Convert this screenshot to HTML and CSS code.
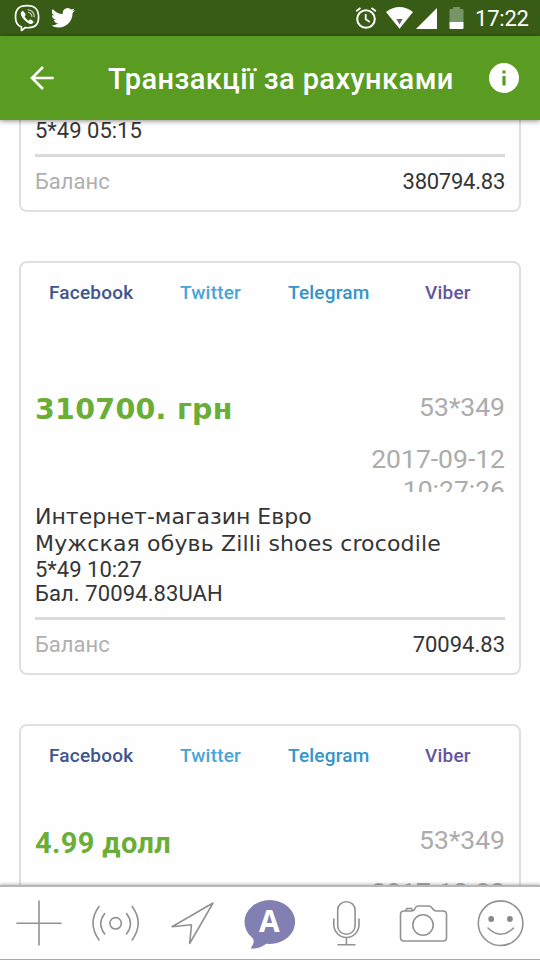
FILE: index.html
```html
<!DOCTYPE html>
<html lang="uk">
<head>
<meta charset="utf-8">
<title>Транзакції за рахунками</title>
<link rel="stylesheet" href="styles.css">
</head>
<body>
<div class="screen">
  <div class="status">
    <svg class="viber" width="26" height="28" viewBox="0 0 26 28" fill="none" stroke="#fff" stroke-width="1.8" stroke-linecap="round" stroke-linejoin="round">
      <path d="M7.500 24V27.500Q8 27.800 11 24.700C20.500 25.200 24.500 22.500 24.600 14.500C24.600 6 21 2.700 13 2.700C5 2.700 1.500 6 1.500 14C1.500 19.500 3.500 22.700 7.500 24Z" stroke-width="1.700"/>
      <path d="M8.300 8.500C6.200 9.200 7 13 10.800 17C14.800 20.900 18.100 21.500 18.900 19.500C19.500 18 16.500 16.200 15.500 17.200L14.600 18C12.800 17.300 10.800 15.200 10.300 13.300L11 12.300C11.700 11.200 9.800 8.200 8.300 8.500Z" fill="#fff" stroke-width="1"/>
      <path d="M14 6.800C18 7.200 20.200 9.800 20.300 13.800M14.500 9.500C16.700 9.900 17.700 11.200 17.900 13.500" stroke-width="1.200" opacity=".7"/>
    </svg>
    <svg class="bird" width="24" height="20" viewBox="0 0 24 20" fill="#fff"><path d="M24 2.370a9.800 9.800 0 0 1-2.830.78A4.940 4.940 0 0 0 23.340.420a9.860 9.860 0 0 1-3.130 1.200A4.920 4.920 0 0 0 11.700 5a5.100 5.100 0 0 0 .13 1.120A13.970 13.970 0 0 1 1.690.980a4.930 4.930 0 0 0 1.530 6.570A4.900 4.900 0 0 1 1 6.940V7a4.930 4.930 0 0 0 3.950 4.830 4.900 4.900 0 0 1-2.220.08 4.930 4.930 0 0 0 4.600 3.420A9.880 9.880 0 0 1 0 17.370 13.930 13.930 0 0 0 7.550 19.580c9.140 0 14.310-7.720 13.970-14.640A10 10 0 0 0 24 2.370Z"/></svg>
    <span class="grow"></span>
    <svg class="alarm" width="22" height="24" viewBox="0 0 22 24" fill="none" stroke="#fff" stroke-width="2"><circle cx="11" cy="13" r="8.800"/><path d="M10.700 8V13.300L14.800 16M1.200 5.300L5.500 1.900M20.800 5.300L16.500 1.900" stroke-width="1.800"/></svg>
    <svg class="wifi" width="27" height="22" viewBox="0 0 27 22"><path d="M0 5Q13.500-5 27 5L13.500 21.800Z" fill="#fff"/><path d="M10.300 12H16.700L13.500 17.500Z" fill="#766080"/></svg>
    <svg class="signal" width="21" height="21" viewBox="0 0 21 21"><path d="M21 0V21H0Z" fill="#fff"/></svg>
    <svg class="battery" width="15" height="22" viewBox="0 0 15 22"><path d="M1.500 2H4V0H11V2H13.500Q14.500 2 14.500 3V15H.5V3Q.5 2 1.500 2Z" fill="#779466"/><path d="M.5 15H14.500V21Q14.500 22 13.500 22H1.500Q.5 22 .5 21Z" fill="#fff"/></svg>
    <span class="clock">17:22</span>
  </div>
  <header class="bar">
    <svg class="back" width="26" height="26" viewBox="0 0 26 26" fill="none" stroke="#fff" stroke-width="2.600"><path d="M24.700 13H3M14 2L3 13L14 24"/></svg>
    <h1>Транзакції за рахунками</h1>
    <svg class="info" width="30" height="30" viewBox="0 0 30 30"><circle cx="15" cy="15" r="15" fill="#fff"/><path d="M13.400 7.500H16.600V10.500H13.400ZM13.400 13H16.600V22.500H13.400Z" fill="#5a9c22"/></svg>
  </header>
  <main class="feed">
    <section class="card cut">
      <p class="line first">5*49 05:15</p>
      <div class="balance"><span>Баланс</span><b class="tight">380794.83</b></div>
    </section>
    <section class="card">
      <nav class="share"><span class="fb">Facebook</span><span class="tw">Twitter</span><span class="tg">Telegram</span><span class="vb">Viber</span></nav>
      <div class="summary">
        <strong class="amount wide">310700. грн</strong>
        <div class="meta"><p class="acct">53*349</p><p class="date">2017-09-12<br>10:27:26</p></div>
      </div>
      <div class="details">
        <p class="note shop">Интернет-магазин Евро</p>
        <p class="note item">Мужская обувь Zilli shoes crocodile</p>
        <p class="line">5*49 10:27</p>
        <p class="line total">Бал. 70094.83UAH</p>
      </div>
      <div class="balance"><span>Баланс</span><b>70094.83</b></div>
    </section>
    <section class="card last">
      <nav class="share"><span class="fb">Facebook</span><span class="tw">Twitter</span><span class="tg">Telegram</span><span class="vb">Viber</span></nav>
      <div class="summary near">
        <strong class="amount">4.99 долл</strong>
        <div class="meta"><p class="acct">53*349</p><p class="date">2017-12-02</p></div>
      </div>
    </section>
  </main>
  <footer class="tools">
    <svg viewBox="0 0 48 48"><path d="M24 2V46M2 24.300H46"/></svg>
    <svg viewBox="0 0 48 48"><circle cx="23.600" cy="24.300" r="5.700"/><path d="M12.700 14.500Q4.800 24.500 12.700 35M7 7.500Q-5 24 7 41M34.500 14.500Q42.400 24.500 34.500 35M40.200 7.500Q52.200 24 40.200 41"/></svg>
    <svg viewBox="0 0 48 48"><path d="M44 4L3 27.700L22.500 25.700L20.700 44.500Z"/></svg>
    <svg class="bubble" viewBox="0 0 48 48"><ellipse cx="23.800" cy="23" rx="25.300" ry="22"/><path d="M2 32L6 38Q10 42 4.500 49.500Q15 50 21 44Z"/><text x="23.300" y="33" text-anchor="middle">A</text></svg>
    <svg viewBox="0 0 48 48"><rect x="14.700" y="2.700" width="17.400" height="32.500" rx="8.500"/><path d="M10.800 20V25.500A12.600 13 0 0 0 36 25.500V20M23.400 38.500V45.500M15 45.700H32"/></svg>
    <svg viewBox="0 0 48 48"><path d="M4 12H11.500Q14 12 15 9.500Q16 7 18 7H29Q31 7 32.500 9.500Q34 12 36 12H43Q46.500 12 46.500 15.500V38.500Q46.500 42 43 42H4Q.5 42 .5 38.500V15.500Q.5 12 4 12ZM5.500 12L7 9.500H11.500L12.500 11.500"/><circle cx="23" cy="26" r="10.200"/></svg>
    <svg viewBox="0 0 48 48"><circle cx="23.600" cy="24.200" r="22.300"/><path d="M11 29Q23.600 41.500 36.500 29"/><g class="eyes"><circle cx="14.200" cy="20" r="2.900"/><circle cx="32.900" cy="20" r="2.900"/></g></svg>
  </footer>
</div>
</body>
</html>
```

FILE: styles.css
```css
* { box-sizing: border-box; }
body { margin: 0; background: #fefefe; font-family: Roboto, "Noto Sans", sans-serif; }
p, h1 { margin: 0; }
svg { display: block; flex: none; }

.screen { width: 540px; height: 960px; display: flex; flex-direction: column; overflow: hidden; }
.grow { flex: 1; }

.status { height: 36px; flex: none; display: flex; align-items: flex-start; padding: 0 12px 0 14px; background: #385c16; color: #fff; }
.viber { margin-top: 3px; overflow: visible; }
.bird { margin: 8px 0 0 11px; }
.alarm { margin: 6px 9px 0 0; }
.wifi { margin: 7px 3px 0 0; }
.signal { margin: 8px 12px 0 0; }
.battery { margin: 7px 11px 0 0; }
.clock { font-size: 22px; line-height: 38px; width: 53px; letter-spacing: -.2px; white-space: nowrap; }

.bar { height: 84px; flex: none; display: flex; align-items: center; padding: 0 21px 0 29px; background: #5a9c22; color: #fff; box-shadow: 0 1px 5px rgba(0, 0, 0, .45); z-index: 1; }
.bar h1 { flex: 1; margin-left: 53px; font-size: 29px; line-height: 40px; font-weight: 500; letter-spacing: .44px; padding-top: 2px; white-space: nowrap; }

.feed { flex: 1; min-height: 0; overflow: hidden; padding: 0 19px; }
.card { height: 414px; border: 2px solid #dfdfdf; border-radius: 8px; padding: 0 14px; margin-bottom: 49px; color: #353535; }
.card.cut { height: 92px; border-top: 0; border-radius: 0 0 8px 8px; }

.share { height: 59px; display: flex; align-items: center; font-size: 19px; font-weight: 500; letter-spacing: .2px; padding-left: 14px; }
.fb { width: 131px; color: #40558c; }
.tw { width: 108px; color: #48a5d8; }
.tg { width: 137px; color: #3495cb; }
.vb { color: #6555a0; }

.summary { height: 169.500px; padding-top: 69px; display: flex; justify-content: space-between; overflow: hidden; }
.summary.near { padding-top: 39px; }
.amount { font-size: 29px; line-height: 38px; letter-spacing: .35px; color: #6aae38; white-space: nowrap; }
.amount.wide { font-family: "DejaVu Sans", sans-serif; font-size: 28.500px; letter-spacing: .27px; }
.meta { text-align: right; font-size: 26.500px; line-height: 31px; color: #acacac; }
.acct { margin-bottom: 21px; }

.details { height: 125.500px; padding-top: 11px; white-space: nowrap; }
.note { font-family: "DejaVu Sans", sans-serif; font-size: 22px; line-height: 27px; }
.note.item { letter-spacing: .15px; }
.line { font-size: 22px; line-height: 24px; }
.details .line { padding-top: 1px; }
.details .line.total { padding-top: 0; letter-spacing: .1px; }
.line.first { line-height: 22px; height: 34px; }

.balance { border-top: 3px solid #dadada; height: 53px; display: flex; justify-content: space-between; font-size: 22px; line-height: 50px; }
.balance span { color: #b0b0b0; }
.balance b { font-weight: 400; }
.balance .tight { letter-spacing: -.25px; }

.tools { height: 75px; flex: none; display: grid; grid-template-columns: repeat(7, 1fr); justify-items: center; align-items: start; padding-top: 12px; border-top: 2px solid #b7b7b7; border-bottom: 1px solid #aaa; background: #fff; box-shadow: 0 -1px 3px rgba(0, 0, 0, .25); z-index: 1; }
.tools svg { width: 48px; height: 48px; overflow: visible; fill: none; stroke: #929292; stroke-width: 1.600; stroke-linejoin: round; stroke-linecap: round; }
.tools .bubble { fill: #8280b2; stroke: none; }
.bubble text { fill: #fff; font: bold 30px "Open Sans", sans-serif; }
.tools .eyes { fill: #888; stroke: none; }
```
